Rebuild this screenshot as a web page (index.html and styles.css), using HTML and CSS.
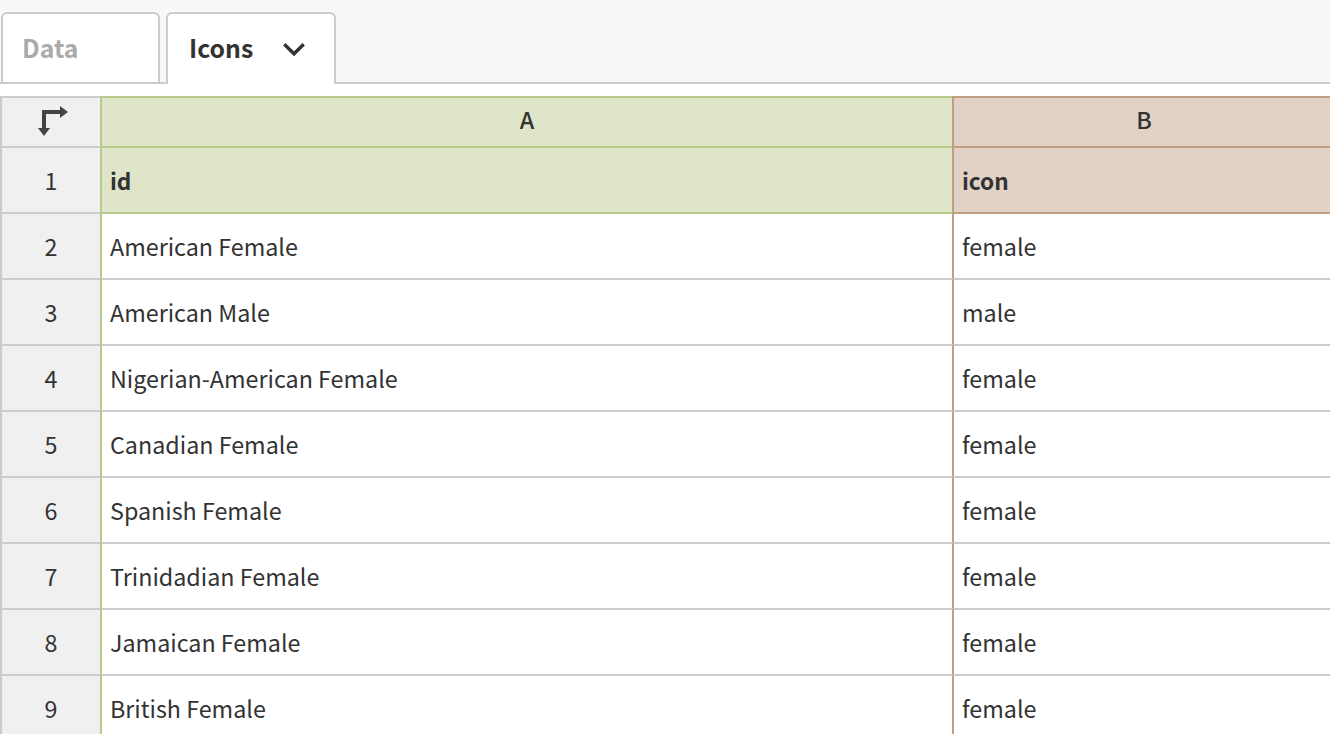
FILE: index.html
```html
<!DOCTYPE html>
<html lang="en">
  <head>
    <meta charset="UTF-8" />
    <title>Icons</title>
    <link rel="stylesheet" href="styles.css">
  </head>
  <body>
    <div class="tabs">
      <div class="tab">Data</div>
      <div class="tab tab-active">
        Icons
        <svg class="tab-caret" width="22" height="14" viewBox="0 0 22 14">
          <path d="M1.3 1.3 L11 10.8 L20.7 1.3" fill="none" stroke="#333" stroke-width="3.4"/>
        </svg>
      </div>
    </div>

    <table class="sheet">
      <colgroup>
        <col class="col-index">
        <col class="col-id">
        <col class="col-icon">
      </colgroup>
      <tr class="letters">
        <th class="index">
          <svg width="30" height="30" viewBox="0 0 30 30">
            <path d="M6 23 V6 H23" fill="none" stroke="#444" stroke-width="4"/>
            <path d="M22 0 L30 6 L22 12 Z M0 22 H12 L6 30 Z" fill="#444"/>
          </svg>
        </th>
        <th class="a">A</th>
        <th class="b">B</th>
      </tr>
      <tr class="names">
        <td class="index">1</td>
        <td class="a">id</td>
        <td class="b">icon</td>
      </tr>
      <tr class="first">
        <td class="index">2</td>
        <td class="a">American Female</td>
        <td class="b">female</td>
      </tr>
      <tr>
        <td class="index">3</td>
        <td class="a">American Male</td>
        <td class="b">male</td>
      </tr>
      <tr>
        <td class="index">4</td>
        <td class="a">Nigerian-American Female</td>
        <td class="b">female</td>
      </tr>
      <tr>
        <td class="index">5</td>
        <td class="a">Canadian Female</td>
        <td class="b">female</td>
      </tr>
      <tr>
        <td class="index">6</td>
        <td class="a">Spanish Female</td>
        <td class="b">female</td>
      </tr>
      <tr>
        <td class="index">7</td>
        <td class="a">Trinidadian Female</td>
        <td class="b">female</td>
      </tr>
      <tr>
        <td class="index">8</td>
        <td class="a">Jamaican Female</td>
        <td class="b">female</td>
      </tr>
      <tr>
        <td class="index">9</td>
        <td class="a">British Female</td>
        <td class="b">female</td>
      </tr>
    </table>
  </body>
</html>
```

FILE: styles.css
```css
html,
body {
  height: 734px;
  overflow: hidden;
}
body {
  margin: 0;
  background-color: #fff;
  color: #333;
  font-family: "Noto Sans CJK SC", "Noto Sans", sans-serif;
  font-size: 23.3px;
  line-height: 30px;
}

.tabs {
  display: flex;
  gap: 6px;
  height: 84px;
  box-sizing: border-box;
  padding: 12px 0 0 1px;
  background-color: #f8f8f8;
  border-bottom: 2px solid #ccc;
}
.tab {
  display: flex;
  align-items: center;
  box-sizing: border-box;
  width: 159px;
  height: 70px;
  padding: 0 0 2px 19px;
  background-color: #fff;
  border: 2px solid #ccc;
  border-bottom: none;
  border-radius: 6px 6px 0 0;
  color: #aaa;
  font-size: 24.8px;
  font-weight: 700;
}
.tab-active {
  width: 170px;
  height: 72px;
  padding-left: 21px;
  padding-bottom: 4px;
  color: #333;
}
.tab-caret {
  margin: 6px 0 0 30px;
}

.sheet {
  margin-top: 12px;
  width: 1334px;
  table-layout: fixed;
  border-collapse: separate;
  border-spacing: 0;
}
.col-index {
  width: 100px;
}
.col-id {
  width: 852px;
}
.sheet tr {
  height: 66px;
}
.sheet tr.letters {
  height: 50px;
}
.sheet th,
.sheet td {
  box-sizing: border-box;
  padding: 0 8px;
  border-top: 2px solid #ccc;
  border-left: 2px solid #ccc;
  text-align: left;
  font-weight: 400;
  white-space: nowrap;
}
.sheet .index {
  padding: 0;
  background-color: #f0f0f0;
  text-align: center;
}
.sheet .index svg {
  display: block;
  margin: 0 0 2px 36px;
}
.sheet .a {
  border-left-color: #b8c98a;
}
.sheet .b {
  border-left-color: #c09f85;
}
.letters .a,
.names .a,
.first .a {
  border-top-color: #b8c98a;
}
.letters .b,
.names .b,
.first .b {
  border-top-color: #c09f85;
}
.letters .a,
.names .a {
  background-color: #dfe5c9;
}
.letters .b,
.names .b {
  background-color: #e2d2c6;
}
.sheet th.a,
.sheet th.b {
  padding-bottom: 6px;
  text-align: center;
  font-weight: 500;
}
.sheet .names .a,
.sheet .names .b {
  padding-top: 2px;
  font-size: 22.6px;
  font-weight: 700;
}
```
